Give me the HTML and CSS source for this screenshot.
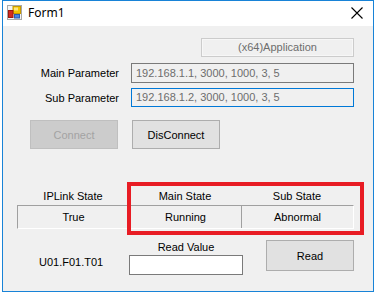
FILE: index.html
```html
<!DOCTYPE html>
<html>
<head>
<meta charset="utf-8">
<link rel="stylesheet" href="styles.css">
</head>
<body>
<div class="window">
  <div class="titlebar">
    <svg class="app-icon" width="15" height="15" viewBox="0 0 15 15">
      <rect x="0.5" y="0.5" width="14" height="14" fill="#f4f4f4" stroke="#a8a8a8"/>
      <rect x="6" y="1.5" width="7.5" height="7" fill="#f2c400" stroke="#c89a00" stroke-width="1"/>
      <rect x="7" y="2.5" width="4" height="3" fill="#ffe680"/>
      <rect x="1.5" y="5.5" width="4.5" height="7" fill="#d42a1e" stroke="#9c1a10" stroke-width="1"/>
      <rect x="7.5" y="9.5" width="5" height="3.5" fill="#4a86e0" stroke="#2a5cb0" stroke-width="1"/>
    </svg>
    <span class="title">Form1</span>
    <svg class="close" width="12" height="12" viewBox="0 0 12 12">
      <path d="M0.5 0.5 L11.5 11.5 M11.5 0.5 L0.5 11.5" stroke="#000" stroke-width="1.1" fill="none"/>
    </svg>
  </div>
  <div class="client">
    <div class="app-row"><div class="app-box">(x64)Application</div></div>
    <div class="param main">
      <span class="plabel">Main Parameter</span>
      <div class="tb ro">192.168.1.1, 3000, 1000, 3, 5</div>
    </div>
    <div class="param sub">
      <span class="plabel">Sub Parameter</span>
      <div class="tb ro focus">192.168.1.2, 3000, 1000, 3, 5</div>
    </div>
    <div class="buttons">
      <div class="btn disabled">Connect</div>
      <div class="btn">DisConnect</div>
    </div>
    <div class="status">
      <div class="heads"><span>IPLink State</span><span>Main State</span><span>Sub State</span></div>
      <div class="cells"><span>True</span><span class="div">Running</span><span class="div">Abnormal</span></div>
      <div class="highlight"></div>
    </div>
    <div class="bottom">
      <div class="u01">U01.F01.T01</div>
      <div class="readval">
        <div class="rlabel">Read Value</div>
        <div class="tb white"></div>
      </div>
      <div class="btn read">Read</div>
    </div>
  </div>
</div>
</body>
</html>
```

FILE: styles.css
```css
* { box-sizing: border-box; }
html, body { margin: 0; padding: 0; background: #ffffff; }
body { width: 377px; height: 294px; overflow: hidden; }

.window {
  margin-left: 2px;
  width: 372px;
  height: 292px;
  border: 1px solid #1883d7;
  background: #f0f0f0;
  display: flex;
  flex-direction: column;
}

.titlebar {
  height: 25px;
  background: #ffffff;
  display: flex;
  align-items: center;
  padding-left: 4px;
  padding-bottom: 1px;
}
.app-icon { display: block; margin-top: -1px; }
.title {
  font-family: "Noto Sans", "Open Sans", sans-serif;
  font-size: 12px;
  color: #000;
  margin-left: 6px;
  margin-top: -1px;
}
.close { margin-left: auto; margin-right: 10px; display: block; }

.client {
  flex: 1;
  background: #f0f0f0;
  font-family: "Liberation Sans", Arial, sans-serif;
  font-size: 11px;
  color: #000;
  padding-top: 12px;
}

.app-row { display: flex; justify-content: flex-end; padding-right: 19px; }
.app-box {
  width: 153px;
  height: 19px;
  border: 1px solid #cccccc;
  box-shadow: inset 0 0 0 1px #f7f7f7;
  color: #6d6d6d;
  text-align: center;
  line-height: 17px;
}

.param {
  display: grid;
  grid-template-columns: 116px 223px;
  column-gap: 12px;
  align-items: center;
}
.param.main { margin-top: 6px; }
.param.sub { margin-top: 5px; }
.plabel { text-align: right; }
.tb {
  height: 20px;
  border: 1px solid #7a7a7a;
  padding-left: 4px;
  line-height: 18px;
}
.tb.ro { background: #f0f0f0; color: #6d6d6d; }
.tb.focus { border-color: #0078d7; height: 19px; line-height: 17px; }
.tb.white { background: #ffffff; }

.buttons {
  display: flex;
  gap: 14px;
  padding-left: 27px;
  margin-top: 13px;
}
.btn {
  width: 88px;
  height: 29px;
  background: #e1e1e1;
  border: 1px solid #adadad;
  display: flex;
  align-items: center;
  justify-content: center;
}
.btn.disabled { background: #cccccc; border-color: #bfbfbf; color: #a3a3a3; }

.status {
  position: relative;
  margin-top: 37px;
  padding-left: 14px;
}
.heads {
  display: grid;
  grid-template-columns: 112px 112px 112px;
  height: 19px;
  align-items: center;
  text-align: center;
}
.cells {
  display: grid;
  grid-template-columns: 111px 112px 112px;
  width: 337px;
  height: 24px;
  border-top: 1px solid #a0a0a0;
  border-left: 1px solid #a0a0a0;
  border-bottom: 1px solid #ffffff;
  border-right: 1px solid #ffffff;
}
.cells span {
  display: flex;
  align-items: center;
  justify-content: center;
}
.cells span.div { border-left: 1px solid #a0a0a0; }

.highlight {
  position: absolute;
  left: 124px;
  top: -4px;
  width: 237px;
  height: 53px;
  border: 4px solid #e81c24;
}

.bottom {
  display: flex;
  align-items: flex-start;
}
.u01 {
  width: 126px;
  padding-left: 36px;
  margin-top: 25px;
  line-height: 16px;
}
.readval { width: 114px; margin-top: 10px; }
.rlabel { text-align: center; line-height: 16px; height: 16px; }
.btn.read {
  margin-left: 23px;
  margin-top: 11px;
  height: 31px;
  font-size: 11px;
}
```
